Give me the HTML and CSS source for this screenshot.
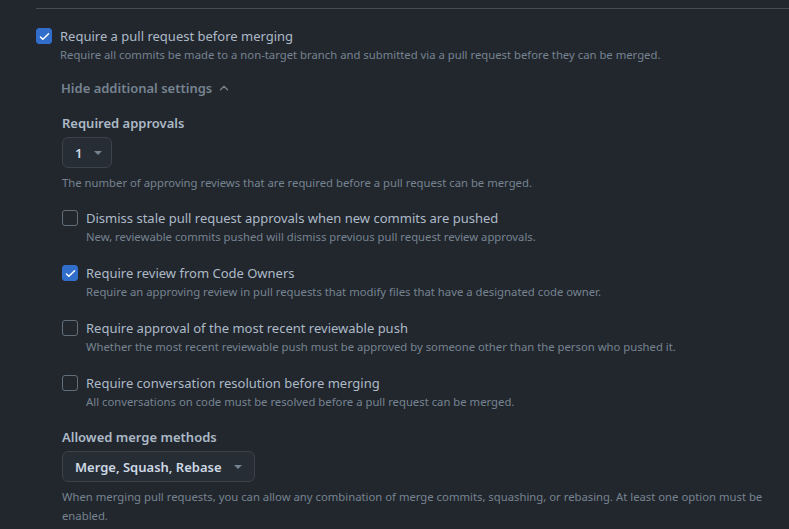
FILE: index.html
```html
<!DOCTYPE html>
<html lang="en">
<head>
  <meta charset="UTF-8">
  <title>Branch protection</title>
  <link rel="stylesheet" href="styles.css">
</head>
<body>
  <div class="rule">
    <div class="option">
      <span class="box checked">
        <svg viewBox="0 0 16 16" width="13" height="13"><path d="M3 8.5l3 3 7-7" fill="none" stroke="#fff" stroke-width="1.8" stroke-linecap="round" stroke-linejoin="round"/></svg>
      </span>
      <div class="option-text">
        <div class="option-title">Require a pull request before merging</div>
        <div class="note">Require all commits be made to a non-target branch and submitted via a pull request before they can be merged.</div>
      </div>
    </div>

    <div class="more">
      <button class="toggle">Hide additional settings
        <svg viewBox="0 0 16 16" width="14" height="14"><path d="M4 10l4-4 4 4" fill="none" stroke="currentColor" stroke-width="1.5" stroke-linecap="round" stroke-linejoin="round"/></svg>
      </button>

      <div class="field">
        <div class="field-label">Required approvals</div>
        <button class="select small">1 <span class="caret"></span></button>
        <div class="note">The number of approving reviews that are required before a pull request can be merged.</div>
      </div>

      <div class="option sub">
        <span class="box"></span>
        <div class="option-text">
          <div class="option-title">Dismiss stale pull request approvals when new commits are pushed</div>
          <div class="note">New, reviewable commits pushed will dismiss previous pull request review approvals.</div>
        </div>
      </div>

      <div class="option sub">
        <span class="box checked">
          <svg viewBox="0 0 16 16" width="13" height="13"><path d="M3 8.5l3 3 7-7" fill="none" stroke="#fff" stroke-width="1.8" stroke-linecap="round" stroke-linejoin="round"/></svg>
        </span>
        <div class="option-text">
          <div class="option-title">Require review from Code Owners</div>
          <div class="note">Require an approving review in pull requests that modify files that have a designated code owner.</div>
        </div>
      </div>

      <div class="option sub">
        <span class="box"></span>
        <div class="option-text">
          <div class="option-title">Require approval of the most recent reviewable push</div>
          <div class="note">Whether the most recent reviewable push must be approved by someone other than the person who pushed it.</div>
        </div>
      </div>

      <div class="option sub">
        <span class="box"></span>
        <div class="option-text">
          <div class="option-title">Require conversation resolution before merging</div>
          <div class="note">All conversations on code must be resolved before a pull request can be merged.</div>
        </div>
      </div>

      <div class="field merge">
        <div class="field-label">Allowed merge methods</div>
        <button class="select">Merge, Squash, Rebase <span class="caret"></span></button>
        <div class="note">When merging pull requests, you can allow any combination of merge commits, squashing, or rebasing. At least one option must be enabled.</div>
      </div>
    </div>
  </div>
</body>
</html>
```
FILE: styles.css
```css
*{
  margin: 0;
  padding: 0;
  box-sizing: border-box;
}
body{
  background: #22272e;
  color: #adbac7;
  font-family: "Noto Sans", "Open Sans", sans-serif;
  font-size: 13px;
  line-height: 20px;
  padding-left: 36px;
  overflow: hidden;
}
.rule{
  margin-top: 8px;
  border-top: 1px solid #444c56;
  padding-top: 17px;
}
.option{
  display: flex;
  gap: 8px;
}
.box{
  flex: none;
  width: 16px;
  height: 16px;
  margin-top: 2px;
  border: 1px solid #636e7b;
  border-radius: 3px;
  display: flex;
  align-items: center;
  justify-content: center;
}
.box.checked{
  background: #316dca;
  border-color: #316dca;
}
.option-title{
  color: #adbac7;
}
.note{
  font-size: 11.3px;
  line-height: 18px;
  color: #768390;
}
.more{
  padding-left: 26px;
}
.toggle{
  margin-top: 14px;
  margin-left: -1px;
  background: none;
  border: 0;
  font: inherit;
  font-weight: 600;
  color: #768390;
  display: flex;
  align-items: center;
  gap: 5px;
}
.field{
  margin-top: 15px;
}
.field-label{
  font-weight: 600;
  color: #adbac7;
}
.select{
  margin-top: 4px;
  height: 31px;
  padding: 0 12px;
  display: inline-flex;
  align-items: center;
  gap: 10px;
  background: #272d35;
  border: 1px solid #3b424b;
  border-radius: 6px;
  font: inherit;
  font-weight: 600;
  color: #cdd9e5;
}
.caret{
  width: 0;
  height: 0;
  border-left: 4px solid transparent;
  border-right: 4px solid transparent;
  border-top: 4px solid #768390;
  margin-left: 2px;
}
.select.small{
  width: 50px;
}
.field .note{
  margin-top: 6px;
}
.option.sub{
  margin-top: 16px;
}
.option.sub + .option.sub{
  margin-top: 17px;
}
.merge{
  margin-top: 16px;
}
.merge .note{
  margin-top: 5px;
  line-height: 19px;
  max-width: 705px;
}
```
